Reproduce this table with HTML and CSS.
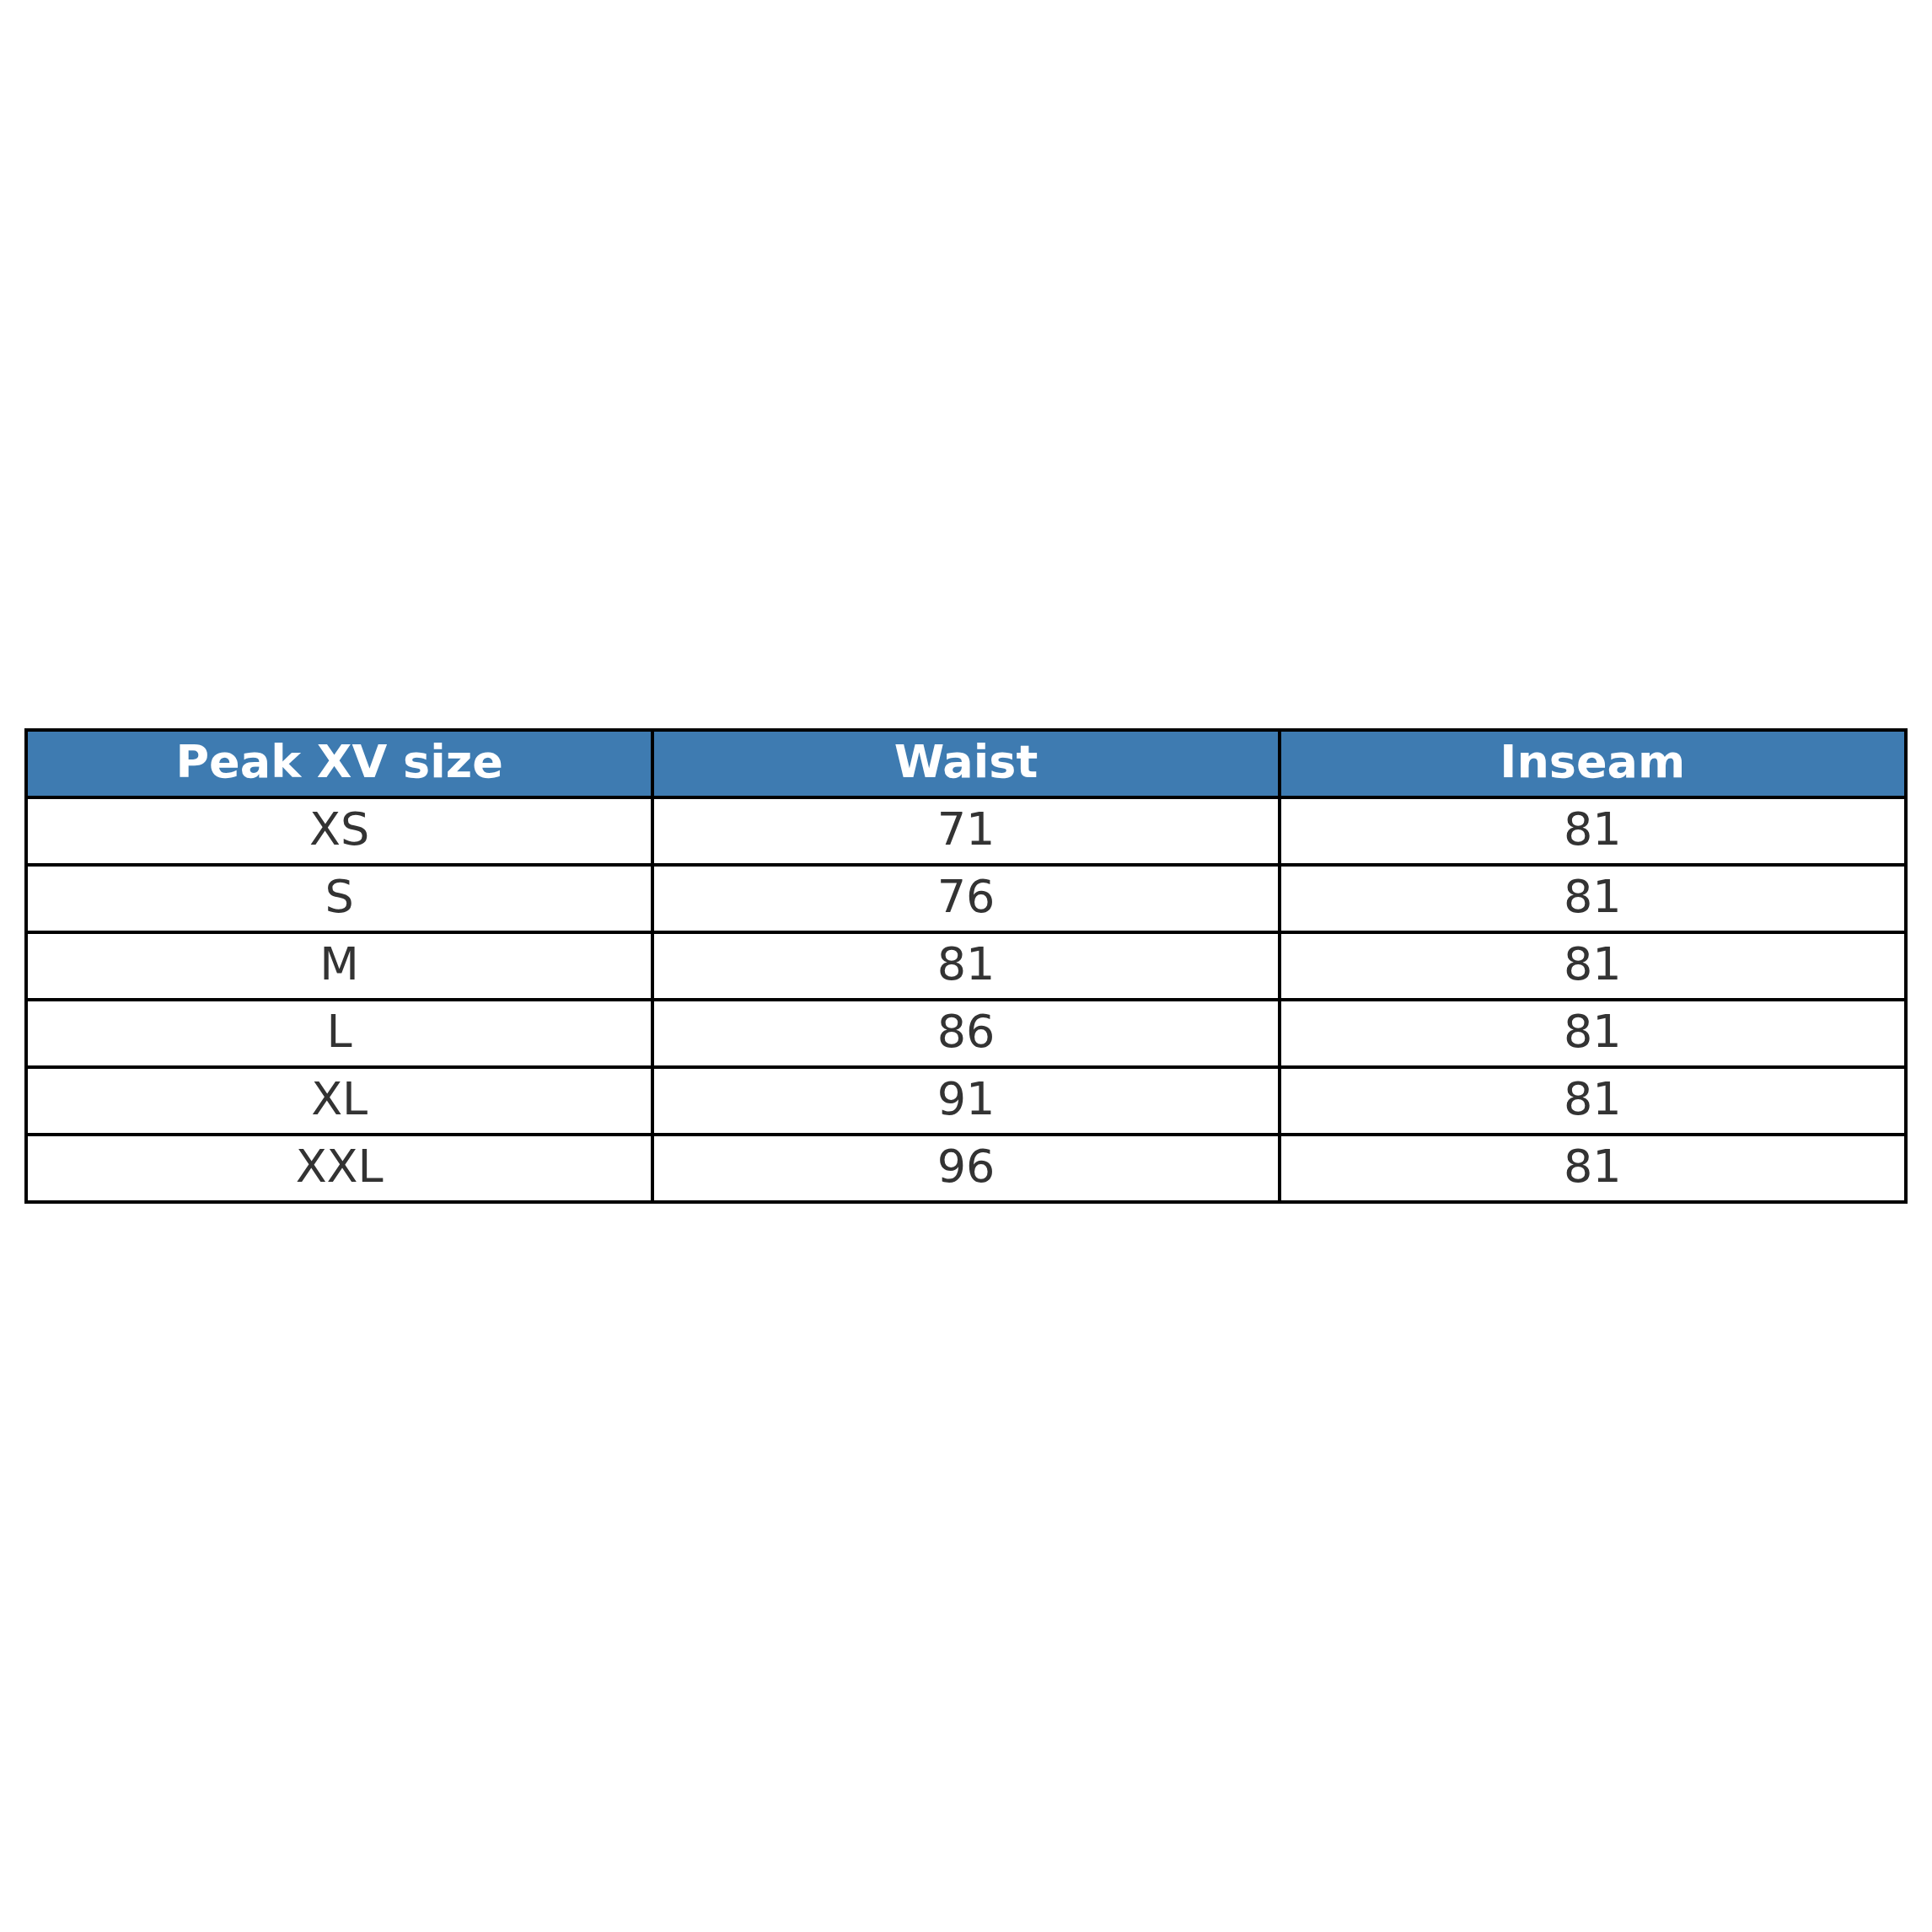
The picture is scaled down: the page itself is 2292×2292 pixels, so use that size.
FILE: index.html
```html
<!DOCTYPE html>
<html>
<head>
<meta charset="utf-8">
<link rel="stylesheet" href="styles.css">
</head>
<body>
<div class="page">
  <table class="size-table">
    <thead>
      <tr><th>Peak XV size</th><th>Waist</th><th>Inseam</th></tr>
    </thead>
    <tbody>
      <tr><td>XS</td><td>71</td><td>81</td></tr>
      <tr><td>S</td><td>76</td><td>81</td></tr>
      <tr><td>M</td><td>81</td><td>81</td></tr>
      <tr><td>L</td><td>86</td><td>81</td></tr>
      <tr><td>XL</td><td>91</td><td>81</td></tr>
      <tr><td>XXL</td><td>96</td><td>81</td></tr>
    </tbody>
  </table>
</div>
</body>
</html>
```
FILE: styles.css
```css
html, body {
  margin: 0;
  padding: 0;
  background: #ffffff;
}
.page {
  height: 2292px;
  padding: 0 29px;
  box-sizing: border-box;
  display: flex;
  align-items: center;
  justify-content: center;
  font-family: "DejaVu Sans", sans-serif;
}
.size-table {
  width: 100%;
  border-collapse: collapse;
  table-layout: fixed;
}
.size-table th,
.size-table td {
  border: 4px solid #000000;
  height: 71px;
  padding: 0 0 5px 0;
  text-align: center;
  vertical-align: middle;
  font-size: 54px;
  line-height: 1;
}
.size-table th {
  background: #3e7bb1;
  color: #ffffff;
  font-weight: bold;
}
.size-table td {
  color: #333333;
}
```
